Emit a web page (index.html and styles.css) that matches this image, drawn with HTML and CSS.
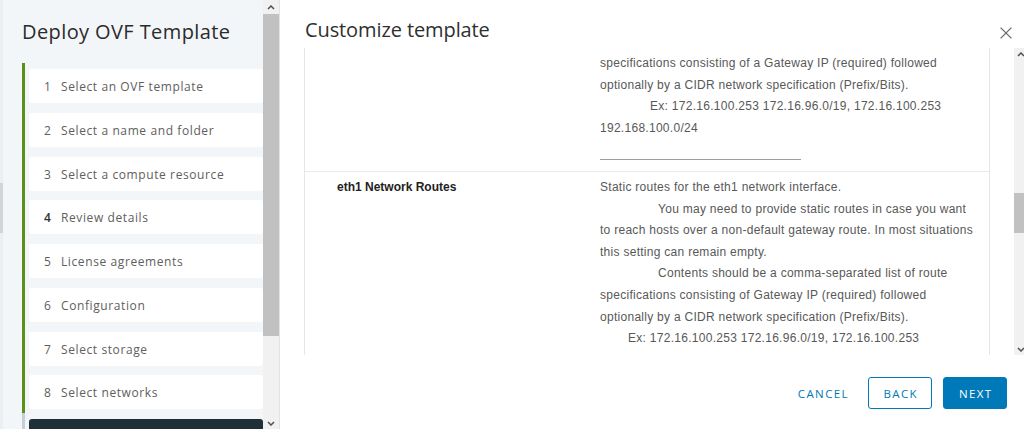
FILE: index.html
```html
<!DOCTYPE html>
<html lang="en">
<head>
<meta charset="utf-8">
<title>Deploy OVF Template</title>
<link rel="stylesheet" href="styles.css">
</head>
<body>
<div class="page">
  <div class="edge"><div class="edge-gap"></div><div class="edge-block"></div></div>
  <aside class="sidebar">
    <div class="side-content">
      <h1 class="side-title">Deploy OVF Template</h1>
      <ol class="steps">
        <li class="step done"><div class="step-card"><span class="num">1</span><span class="lbl">Select an OVF template</span></div></li>
        <li class="step done"><div class="step-card"><span class="num">2</span><span class="lbl">Select a name and folder</span></div></li>
        <li class="step done"><div class="step-card"><span class="num">3</span><span class="lbl">Select a compute resource</span></div></li>
        <li class="step done"><div class="step-card"><span class="num num-strong">4</span><span class="lbl">Review details</span></div></li>
        <li class="step done"><div class="step-card"><span class="num">5</span><span class="lbl">License agreements</span></div></li>
        <li class="step done"><div class="step-card"><span class="num">6</span><span class="lbl">Configuration</span></div></li>
        <li class="step done"><div class="step-card"><span class="num">7</span><span class="lbl">Select storage</span></div></li>
        <li class="step done"><div class="step-card"><span class="num">8</span><span class="lbl">Select networks</span></div></li>
        <li class="step current"><div class="step-card step-card-active"></div></li>
      </ol>
    </div>
    <div class="vscroll side-scroll">
      <div class="sb-arrow sb-up"><svg width="8" height="5" viewBox="0 0 8 5"><path d="M1 4 L4 1 L7 4" fill="none" stroke="#505050" stroke-width="1.5"/></svg></div>
      <div class="sb-thumb side-thumb"></div>
      <div class="sb-rest"></div>
      <div class="sb-arrow sb-down side-down"><svg width="8" height="5" viewBox="0 0 8 5"><path d="M1 1 L4 4 L7 1" fill="none" stroke="#505050" stroke-width="1.5"/></svg></div>
    </div>
  </aside>
  <main class="main">
    <header class="main-head">
      <h2 class="main-title">Customize template</h2>
      <button class="close" aria-label="Close"><svg width="12" height="12" viewBox="0 0 12 12"><path d="M0.6 0.6 L11.4 11.4 M11.4 0.6 L0.6 11.4" stroke="#6a6a6a" stroke-width="1.3" fill="none"/></svg></button>
    </header>
    <div class="main-body">
      <div class="table">
        <div class="row row-first">
          <div class="cell-label"></div>
          <div class="cell-desc">
            <div class="ln">specifications consisting of a Gateway IP (required) followed</div>
            <div class="ln">optionally by a CIDR network specification (Prefix/Bits).</div>
            <div class="ln ind-50">Ex: 172.16.100.253 172.16.96.0/19, 172.16.100.253</div>
            <div class="ln">192.168.100.0/24</div>
            <div class="input-line"></div>
          </div>
        </div>
        <div class="row row-second">
          <div class="cell-label">eth1 Network Routes</div>
          <div class="cell-desc">
            <div class="ln">Static routes for the eth1 network interface.</div>
            <div class="ln ind-58">You may need to provide static routes in case you want</div>
            <div class="ln">to reach hosts over a non-default gateway route. In most situations</div>
            <div class="ln">this setting can remain empty.</div>
            <div class="ln ind-58">Contents should be a comma-separated list of route</div>
            <div class="ln">specifications consisting of Gateway IP (required) followed</div>
            <div class="ln">optionally by a CIDR network specification (Prefix/Bits).</div>
            <div class="ln ind-28">Ex: 172.16.100.253 172.16.96.0/19, 172.16.100.253</div>
          </div>
        </div>
      </div>
      <div class="vscroll main-scroll">
        <div class="sb-arrow sb-up main-arrow"><svg width="8" height="5" viewBox="0 0 8 5"><path d="M1 4 L4 1 L7 4" fill="none" stroke="#505050" stroke-width="1.5"/></svg></div>
        <div class="main-gap"></div>
        <div class="sb-thumb main-thumb"></div>
        <div class="sb-rest"></div>
        <div class="sb-arrow sb-down main-arrow"><svg width="8" height="5" viewBox="0 0 8 5"><path d="M1 1 L4 4 L7 1" fill="none" stroke="#505050" stroke-width="1.5"/></svg></div>
      </div>
    </div>
    <footer class="main-foot">
      <button class="btn btn-flat">Cancel</button>
      <button class="btn btn-outline">Back</button>
      <button class="btn btn-primary">Next</button>
    </footer>
  </main>
</div>
</body>
</html>
```
FILE: styles.css
```css
html, body {
  margin: 0;
  padding: 0;
  background: #fff;
}
body {
  font-family: "Liberation Sans", Arial, sans-serif;
}
.page {
  display: flex;
  width: 1024px;
  height: 429px;
  overflow: hidden;
  background: #fff;
}
.edge {
  width: 3px;
  flex: none;
  background: #eceef0;
  display: flex;
  flex-direction: column;
}
.edge-gap { height: 183px; }
.edge-block { height: 50px; background: #d2d4d6; }

.sidebar {
  flex: none;
  display: flex;
  background: #f3f6f9;
  border-right: 1px solid #dfe4e8;
}
.side-content {
  width: 260px;
  padding-left: 19px;
  box-sizing: border-box;
}
.side-title {
  margin: 0;
  height: 63px;
  line-height: 63px;
  font-family: "Open Sans", sans-serif;
  font-weight: 400;
  font-size: 20px;
  letter-spacing: 0.4px;
  color: #2b2b2b;
  white-space: nowrap;
}
.steps {
  list-style: none;
  margin: 0;
  padding: 0;
}
.step {
  height: 43.75px;
  box-sizing: border-box;
  padding: 6px 0 0 4px;
  border-left: 3px solid #5a9218;
}
.step.current { border-left-color: #c9ced2; }
.step-card {
  height: 34px;
  line-height: 35px;
  background: #fff;
  border-radius: 3px;
  padding-left: 15px;
  font-family: "Open Sans", sans-serif;
  font-size: 12px;
  letter-spacing: 0.6px;
  color: #5e5e5e;
  white-space: nowrap;
  display: flex;
}
.step-card-active { background: #1f3039; }
.num {
  width: 17px;
  flex: none;
}
.num-strong { color: #333; font-weight: 600; }

.vscroll {
  flex: none;
  display: flex;
  flex-direction: column;
  background: #f1f1f1;
}
.side-scroll { width: 16px; height: 429px; }
.sb-arrow {
  height: 14px;
  flex: none;
  display: flex;
  align-items: center;
  justify-content: center;
}
.sb-thumb { background: #c1c1c1; flex: none; }
.side-thumb { height: 322px; }
.sb-rest { flex: 1; }
.side-down { height: 11px; }

.main {
  flex: 1;
  min-width: 0;
  display: flex;
  flex-direction: column;
  overflow: hidden;
}
.main-head {
  height: 48px;
  box-sizing: border-box;
  flex: none;
  padding: 10px 12px 0 25px;
  display: flex;
  align-items: center;
  justify-content: space-between;
}
.main-title {
  margin: 0;
  font-family: "Open Sans", sans-serif;
  font-weight: 400;
  font-size: 20px;
  letter-spacing: -0.1px;
  color: #2f2f2f;
  white-space: nowrap;
}
.close {
  border: 0;
  background: none;
  padding: 0;
  width: 12px;
  height: 12px;
  margin-top: 7px;
  display: flex;
}
.main-body {
  height: 307px;
  flex: none;
  display: flex;
  gap: 24px;
  padding-left: 24px;
}
.table {
  width: 686px;
  flex: none;
  box-sizing: border-box;
  border-left: 1px solid #e3e7ea;
  border-right: 1px solid #e3e7ea;
  overflow: hidden;
}
.row {
  display: grid;
  grid-template-columns: 295px 1fr;
  border-bottom: 1px solid #e8ebee;
  box-sizing: border-box;
}
.row-first { height: 124px; padding-top: 5px; }
.row-second { padding-top: 5px; border-bottom: 0; }
.cell-label {
  padding-left: 32px;
  font-size: 12px;
  line-height: 21.6px;
  font-weight: 700;
  color: #222;
  white-space: nowrap;
}
.cell-desc {
  font-size: 12px;
  line-height: 21.6px;
  letter-spacing: 0.28px;
  color: #585858;
}
.ln { white-space: nowrap; }
.ind-58 { padding-left: 58px; }
.ind-50 { padding-left: 50px; }
.ind-28 { padding-left: 28px; }
.input-line {
  width: 201px;
  margin-top: 20px;
  border-bottom: 1px solid #9d9d9d;
}
.main-scroll { width: 17px; height: 307px; }
.main-arrow { height: 12px; justify-content: flex-start; padding-left: 3px; }
.main-gap { height: 133px; flex: none; }
.main-thumb { height: 40px; }

.main-foot {
  flex: 1;
  display: flex;
  justify-content: flex-end;
  align-items: flex-start;
  padding: 22px 17px 0 0;
}
.btn {
  height: 32px;
  box-sizing: border-box;
  font-family: "Open Sans", sans-serif;
  font-size: 11.5px;
  font-weight: 500;
  letter-spacing: 1.4px;
  text-transform: uppercase;
  border-radius: 3px;
  cursor: pointer;
  padding: 0 0 0 1.4px;
}
.btn-flat {
  border: 0;
  background: none;
  color: #0079b8;
  padding: 0 12px 0 13.4px;
  margin-right: 7px;
}
.btn-outline {
  width: 64px;
  border: 1px solid #0079b8;
  background: #fff;
  color: #0079b8;
  margin-right: 11px;
}
.btn-primary {
  width: 64px;
  border: 1px solid #0079b8;
  background: #0079b8;
  color: #fff;
}
```
